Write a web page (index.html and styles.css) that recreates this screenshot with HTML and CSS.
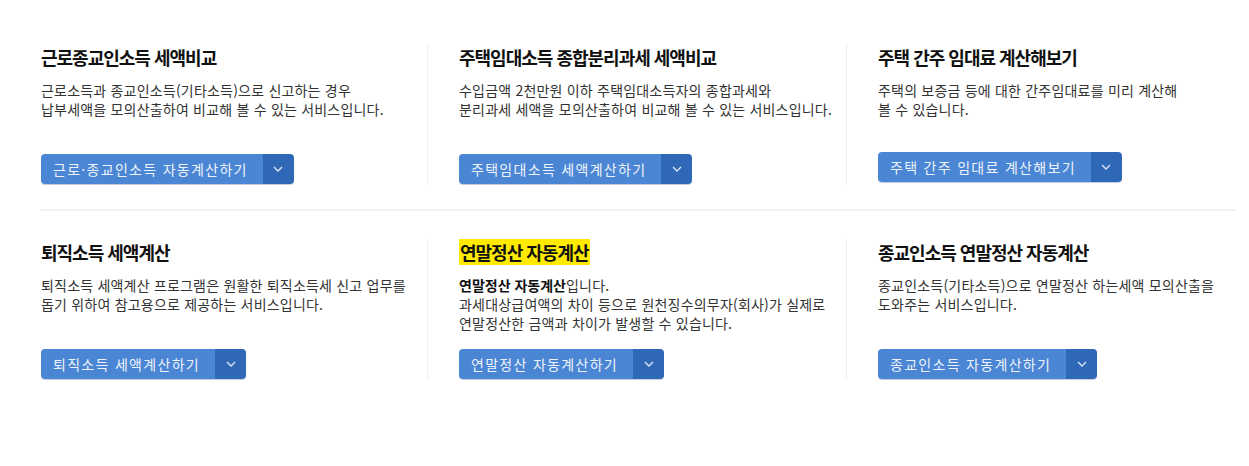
FILE: index.html
```html
<!DOCTYPE html>
<html lang="ko">
<head>
    <meta charset="UTF-8">
    <meta name="viewport" content="width=device-width, initial-scale=1.0">
    <title>모의계산 서비스</title>
    <link rel="stylesheet" href="styles.css">
</head>
<body>
    <div class="container">
        <div class="row">
            <div class="item">
                <h3>근로종교인소득 세액비교</h3>
                <p>근로소득과 종교인소득(기타소득)으로 신고하는 경우<br>납부세액을 모의산출하여 비교해 볼 수 있는 서비스입니다.</p>
                <div class="btn-group">
                    <button type="button" class="btn-main">근로·종교인소득 자동계산하기</button>
                    <button type="button" class="btn-drop"><svg width="10" height="6" viewBox="0 0 10 6"><path d="M1 1l4 4 4-4" fill="none" stroke="currentColor" stroke-width="1.3"/></svg></button>
                </div>
            </div>
            <div class="item">
                <h3>주택임대소득 종합분리과세 세액비교</h3>
                <p>수입금액 2천만원 이하 주택임대소득자의 종합과세와<br>분리과세 세액을 모의산출하여 비교해 볼 수 있는 서비스입니다.</p>
                <div class="btn-group">
                    <button type="button" class="btn-main">주택임대소득 세액계산하기</button>
                    <button type="button" class="btn-drop"><svg width="10" height="6" viewBox="0 0 10 6"><path d="M1 1l4 4 4-4" fill="none" stroke="currentColor" stroke-width="1.3"/></svg></button>
                </div>
            </div>
            <div class="item item-up">
                <h3>주택 간주 임대료 계산해보기</h3>
                <p>주택의 보증금 등에 대한 간주임대료를 미리 계산해<br>볼 수 있습니다.</p>
                <div class="btn-group">
                    <button type="button" class="btn-main">주택 간주 임대료 계산해보기</button>
                    <button type="button" class="btn-drop"><svg width="10" height="6" viewBox="0 0 10 6"><path d="M1 1l4 4 4-4" fill="none" stroke="currentColor" stroke-width="1.3"/></svg></button>
                </div>
            </div>
        </div>

        <div class="row">
            <div class="item">
                <h3>퇴직소득 세액계산</h3>
                <p>퇴직소득 세액계산 프로그램은 원활한 퇴직소득세 신고 업무를<br>돕기 위하여 참고용으로 제공하는 서비스입니다.</p>
                <div class="btn-group">
                    <button type="button" class="btn-main">퇴직소득 세액계산하기</button>
                    <button type="button" class="btn-drop"><svg width="10" height="6" viewBox="0 0 10 6"><path d="M1 1l4 4 4-4" fill="none" stroke="currentColor" stroke-width="1.3"/></svg></button>
                </div>
            </div>
            <div class="item">
                <h3><span class="mark">연말정산 자동계산</span></h3>
                <p><strong>연말정산 자동계산</strong>입니다.<br>과세대상급여액의 차이 등으로 원천징수의무자(회사)가 실제로<br>연말정산한 금액과 차이가 발생할 수 있습니다.</p>
                <div class="btn-group">
                    <button type="button" class="btn-main">연말정산 자동계산하기</button>
                    <button type="button" class="btn-drop"><svg width="10" height="6" viewBox="0 0 10 6"><path d="M1 1l4 4 4-4" fill="none" stroke="currentColor" stroke-width="1.3"/></svg></button>
                </div>
            </div>
            <div class="item">
                <h3>종교인소득 연말정산 자동계산</h3>
                <p>종교인소득(기타소득)으로 연말정산 하는세액 모의산출을<br>도와주는 서비스입니다.</p>
                <div class="btn-group">
                    <button type="button" class="btn-main">종교인소득 자동계산하기</button>
                    <button type="button" class="btn-drop"><svg width="10" height="6" viewBox="0 0 10 6"><path d="M1 1l4 4 4-4" fill="none" stroke="currentColor" stroke-width="1.3"/></svg></button>
                </div>
            </div>
        </div>
    </div>
</body>
</html>
```

FILE: styles.css
```css
body {
    font-family: "Noto Sans CJK KR", "Noto Sans", sans-serif;
    background-color: #fff;
    color: #333;
    margin: 0;
    padding: 0;
}

.container {
    width: 1196px;
    margin-left: 40px;
    padding-top: 43px;
}

.row {
    display: flex;
}

.row + .row {
    margin-top: 24px;
    border-top: 2px solid #f2f2f2;
    padding-top: 27px;
}

.item {
    display: flex;
    flex-direction: column;
    align-items: flex-start;
    height: 141px;
    padding-bottom: 1px;
}

.item:nth-child(1) {
    width: 386px;
    padding-left: 1px;
}

.item:nth-child(2) {
    width: 387px;
    border-left: 1px solid #f0f0f0;
    padding-left: 31px;
}

.item:nth-child(3) {
    flex: 1;
    border-left: 1px solid #f0f0f0;
    padding-left: 31px;
}

/* 세번째 칸은 살짝 위로 */
.item-up h3 {
    margin-top: 0;
}

.item-up .btn-group {
    margin-bottom: 2px;
}

.item h3 {
    margin: 2px 0 0;
    font-size: 18px;
    line-height: 24px;
    font-weight: bold;
    color: #111;
    letter-spacing: -1px;
}

.mark {
    background-color: #ffea00;
    padding: 0 1px;
}

.item p {
    margin: 12px 0 0;
    font-size: 14px;
    line-height: 19px;
    letter-spacing: 0.2px;
}

.item p strong {
    color: #111;
    letter-spacing: 0;
}

.btn-group {
    display: flex;
    margin-top: auto;
    height: 30px;
    border-radius: 4px;
    overflow: hidden;
    box-shadow: 0 1px 0 rgba(20, 60, 120, 0.25);
}

.btn-group button {
    border: none;
    margin: 0;
    font-family: inherit;
    cursor: pointer;
}

.btn-main {
    background-color: #4a86d3;
    color: #eef3fb;
    font-size: 14px;
    padding: 0 15px 0 12px;
    letter-spacing: 1.3px;
}

.btn-drop {
    width: 31px;
    background-color: #2f68b6;
    color: #dfe8f6;
    display: flex;
    align-items: center;
    justify-content: center;
    padding: 0;
}
```
